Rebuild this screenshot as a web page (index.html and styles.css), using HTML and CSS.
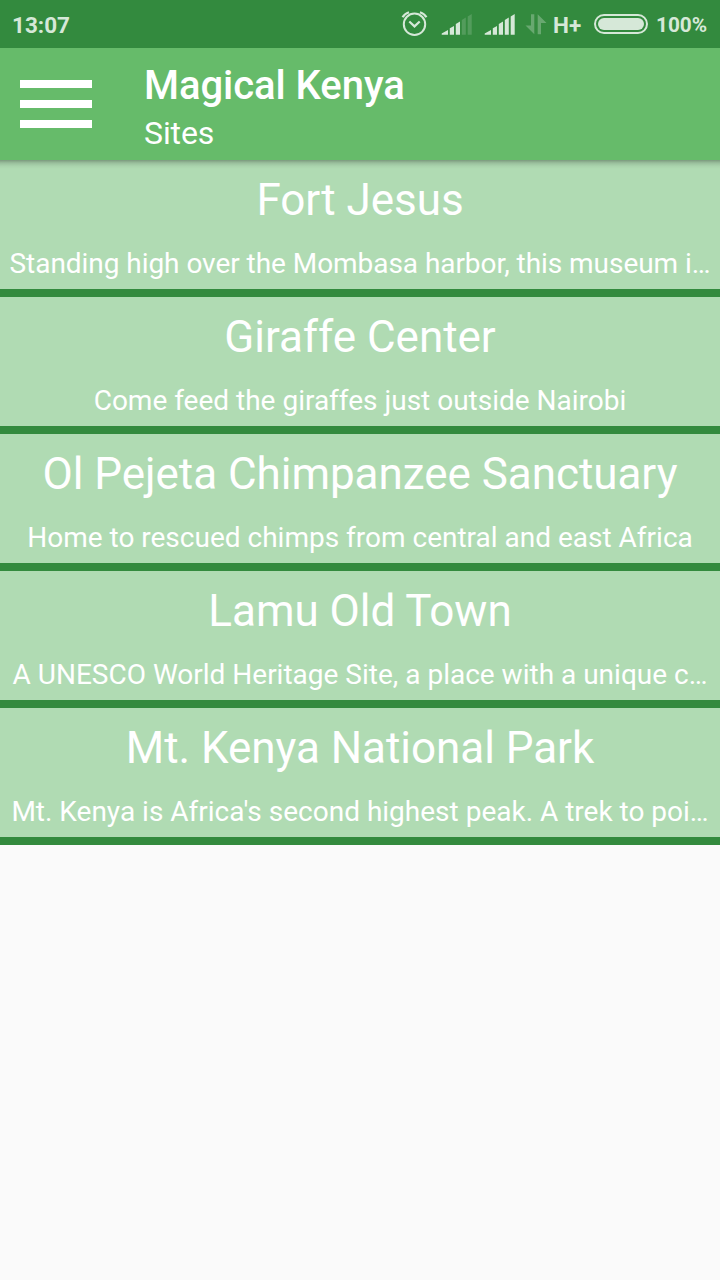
FILE: index.html
```html
<!DOCTYPE html>
<html lang="en">
<head>
<meta charset="utf-8">
<title>Magical Kenya</title>
<link rel="stylesheet" href="styles.css">
</head>
<body>
<div class="status">
  <span class="time">13:07</span>
  <svg class="status-icons" width="150" height="48" viewBox="398 0 150 48">
    <g fill="none" stroke="#d6e8d8" stroke-width="2">
      <circle cx="414.500" cy="24.300" r="10.700"/>
      <path stroke-width="2.200" d="M409.300 21.500l5.200 4.900 5.200-4.900"/>
      <path stroke-width="2.200" d="M402.600 17.300Q404.500 13.500 409 12.200M426.400 17.300Q424.500 13.500 420 12.200"/>
    </g>
    <g fill="#d6e8d8">
      <path d="M441.700 34.700v-1.200l6.300-3.500v4.700zM449.800 34.700v-6.500l4.200-2.300v8.800zM455.800 34.700V24l4.200-2.500v13.200z"/>
      <path opacity=".2" d="M461.800 34.700V20l4-2.500v17.200zM467.700 34.700V16.500l4-2.500v20.700z"/>
      <path d="M484.700 34.700v-1.200l6.300-3.500v4.700zM492.800 34.700v-6.500l4.200-2.300v8.800zM498.800 34.700V24l4.200-2.500v13.200zM504.800 34.700V20l4-2.500v17.200zM510.700 34.700V16.500l4-2.500v20.700z"/>
      <path opacity=".33" d="M531 14.300h3.300v20l-8.800-8.800h5.500zM541 34.300h-3.300v-20l8.800 8.800H541z"/>
    </g>
  </svg>
  <span class="network">H+</span>
  <span class="battery"><span class="charge"></span></span>
  <span class="percent">100%</span>
</div>
<header class="toolbar">
  <div class="menu"><span></span><span></span><span></span></div>
  <div class="titles"><h1>Magical Kenya</h1><p>Sites</p></div>
</header>
<main class="sites">
  <article class="site"><h2>Fort Jesus</h2><p class="snug">Standing high over the Mombasa harbor, this museum i…</p></article>
  <article class="site"><h2>Giraffe Center</h2><p>Come feed the giraffes just outside Nairobi</p></article>
  <article class="site"><h2>Ol Pejeta Chimpanzee Sanctuary</h2><p>Home to rescued chimps from central and east Africa</p></article>
  <article class="site"><h2>Lamu Old Town</h2><p>A UNESCO World Heritage Site, a place with a unique c…</p></article>
  <article class="site"><h2>Mt. Kenya National Park</h2><p>Mt. Kenya is Africa's second highest peak. A trek to poi…</p></article>
</main>
</body>
</html>
```
FILE: styles.css
```css
* { box-sizing: border-box; }
body { margin: 0; min-height: 1280px; background: #fafafa; color: #fff; font-family: Roboto, sans-serif; }
h1, h2, p { margin: 0; font-weight: 400; white-space: nowrap; }
.status { height: 48px; padding: 0 12px; background: #338a3e; color: #d6e8d8; display: flex; align-items: center; font-size: 22.5px; font-weight: 700; }
.time { width: 386px; padding-top: 2px; }
.status-icons { flex: none; }
.network { width: 46px; padding: 2px 0 0 5px; flex: none; }
.battery { width: 54px; height: 20px; border: 2px solid #d6e8d8; border-radius: 10px; padding: 2px; flex: none; }
.charge { display: block; height: 12px; border-radius: 6px; background: #d6e8d8; }
.percent { margin-left: 8px; padding-top: 2px; font-size: 20.8px; }
.toolbar { height: 112px; background: #66bb6a; display: flex; padding-left: 20px; }
.menu { width: 72px; padding-top: 32px; display: flex; flex-direction: column; gap: 12px; }
.menu span { height: 8px; background: #fff; }
.titles { margin-left: 52px; padding-top: 14px; }
h1 { font-size: 40px; line-height: 47px; font-weight: 500; letter-spacing: -0.05px; }
.titles p { font-size: 32px; line-height: 38px; padding-top: 5px; letter-spacing: -0.1px; }
.site { height: 137px; background: #b0dbb3; border-bottom: 8px solid #338a3e; text-align: center; }
.site:first-child { background: linear-gradient(rgba(0, 0, 0, .3), rgba(0, 0, 0, .13) 3px, rgba(0, 0, 0, .04) 6px, transparent 9px) #b0dbb3; }
.site h2 { font-size: 44px; line-height: 52px; padding-top: 14px; letter-spacing: -0.04px; }
.site p { font-size: 28px; line-height: 33px; margin-top: 21px; }
.site .snug { letter-spacing: -0.05px; }
```
